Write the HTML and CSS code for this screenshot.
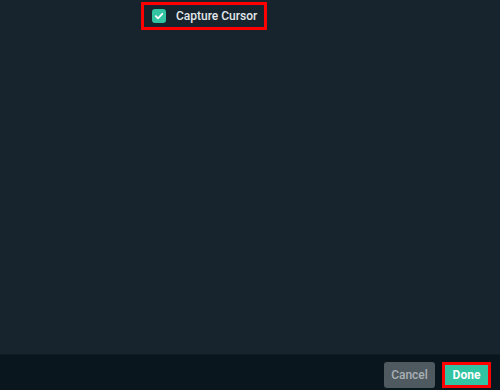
FILE: index.html
```html
<!DOCTYPE html>
<html lang="en">

<head>
    <meta charset="utf-8">
    <meta name="viewport" content="width=device-width, initial-scale=1.0">
    <title>Capture settings</title>
    <link rel="stylesheet" href="styles.css">
</head>

<body>
    <main class="window">
        <div class="content">
            <label class="check_row marked">
                <span class="check_box">
                    <svg width="10" height="10" viewBox="0 0 10 10">
                        <path d="M1.8 5.2 L4 7.3 L8.3 2.8" fill="none" stroke="#fff" stroke-width="1.8"
                            stroke-linecap="round" stroke-linejoin="round" />
                    </svg>
                </span>
                <span class="check_label">Capture Cursor</span>
            </label>
        </div>

        <footer class="footer">
            <button class="btn btn_cancel">Cancel</button>
            <button class="btn btn_done marked">Done</button>
        </footer>
    </main>
</body></html>
```

FILE: styles.css
```css
* {
    margin: 0;
    padding: 0;
    box-sizing: border-box;
}

body {
    width: 500px;
    height: 390px;
    overflow: hidden;
    background: #17242d;
    font-family: Roboto, "Liberation Sans", sans-serif;
}

.window {
    display: flex;
    flex-direction: column;
    height: 100%;
}

.content {
    flex: 1;
    padding: 2px 0 0 141px;
}

.check_row {
    display: flex;
    align-items: center;
    width: 126px;
    height: 28px;
    padding-left: 11px;
}

.marked {
    outline: 3px solid #ff0000;
    outline-offset: -3px;
}

.check_box {
    display: flex;
    align-items: center;
    justify-content: center;
    width: 14px;
    height: 14px;
    border-radius: 3px;
    background: #31c3a2;
}

.check_label {
    margin-left: 10px;
    font-size: 12px;
    font-weight: 500;
    color: #e3e8eb;
}

.footer {
    display: flex;
    justify-content: flex-end;
    gap: 7px;
    height: 36px;
    padding: 7px 9px 0 0;
    background: #09161d;
    border-top: 1px solid #0f1c24;
}

.btn {
    height: 26px;
    border: none;
    border-radius: 3px;
    font-family: inherit;
    font-size: 12px;
    font-weight: 500;
}

.btn_cancel {
    width: 51px;
    background: #4f5a60;
    color: #a8b0b4;
}

.btn_done {
    width: 49px;
    border-radius: 0;
    background: #31c3a2;
    color: #ffffff;
    font-weight: 700;
}
```
